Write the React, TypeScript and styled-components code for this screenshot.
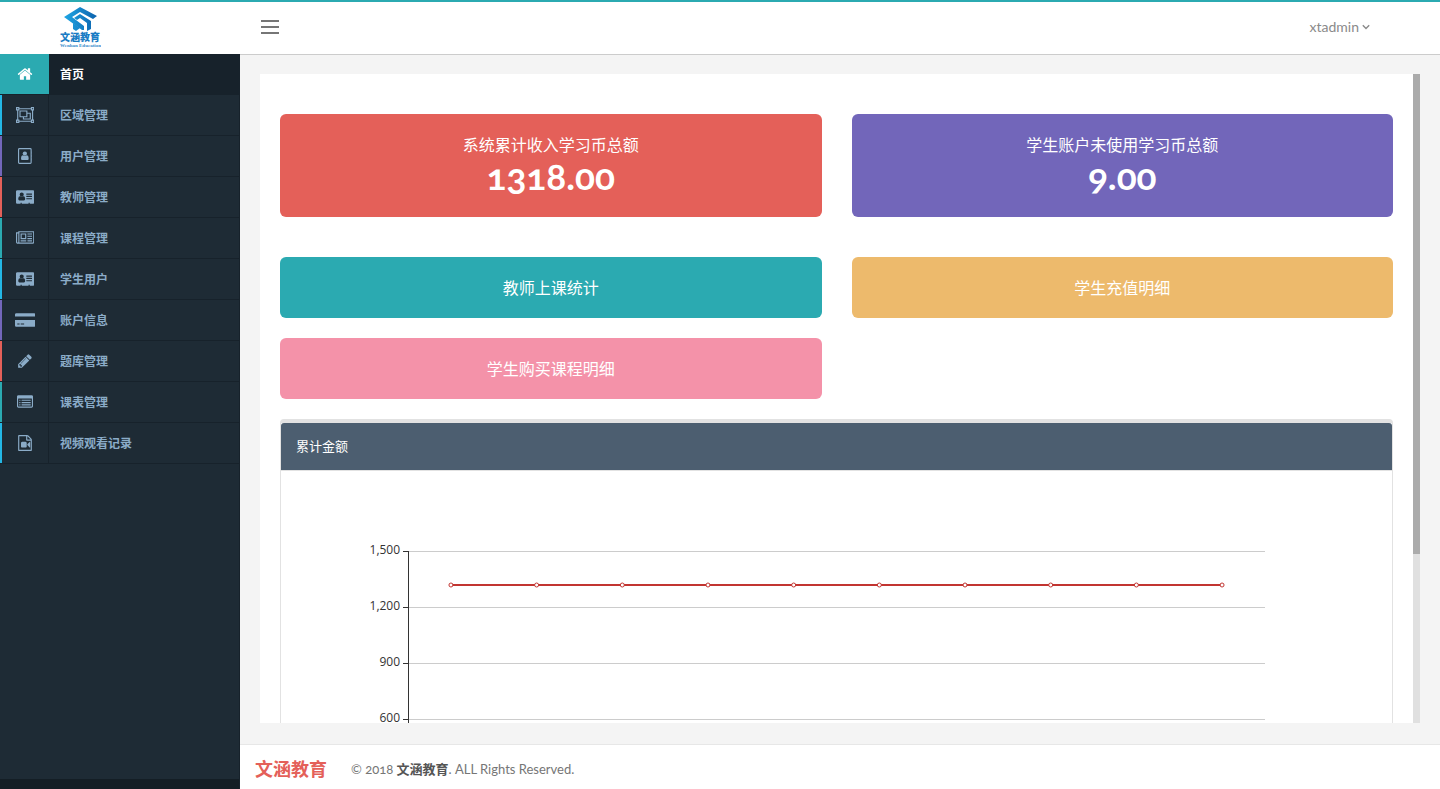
import React, { useEffect, useRef, useState } from "react";
import styled, { createGlobalStyle } from "styled-components";

const GlobalStyle = createGlobalStyle`
  * { box-sizing: border-box; }
  body {
    margin: 0;
    background: #f4f4f4;
    color: #767676;
    font-family: Lato, "Noto Sans CJK SC", sans-serif;
    font-size: 13px;
    line-height: 20px;
    font-variant-numeric: oldstyle-nums;
  }
  a { color: inherit; text-decoration: none; }
  h1, h2, p, ul { margin: 0; padding: 0; }
`;

const Page = styled.div`
  display: flex;
  flex-direction: column;
  height: 100vh;
`;

const Header = styled.header`
  display: flex;
  flex: none;
  height: 54px;
  background: #fff;
  border-top: 2px solid #2baab1;
`;

const Brand = styled.a`
  display: flex;
  width: 240px;
  padding: 5px 0 0 59px;
`;

const Toolbar = styled.div`
  display: flex;
  flex: 1;
  align-items: center;
  justify-content: space-between;
  padding: 0 70px 2px 21px;
`;

const MenuButton = styled.button`
  display: flex;
  flex-direction: column;
  gap: 4px;
  width: 18px;
  padding: 0;
  border: 0;
  background: none;
`;

const MenuBar = styled.span`
  height: 2px;
  background: #767676;
`;

const AccountButton = styled.button`
  display: flex;
  align-items: center;
  gap: 3px;
  padding: 0;
  border: 0;
  background: none;
  color: #8a8a8a;
  font: inherit;
  font-size: 14px;
`;

const Columns = styled.div`
  display: flex;
  flex: 1;
  min-height: 0;
`;

const Sidebar = styled.nav`
  display: flex;
  flex: none;
  flex-direction: column;
  justify-content: space-between;
  width: 240px;
  background: #1e2b35;
  border-right: 1px solid #17222b;
`;

const SidebarFoot = styled.div`
  height: 10px;
  background: #141e25;
`;

const NavList = styled.ul`
  list-style: none;
`;

const NavLink = styled.a<{ $active?: boolean }>`
  display: flex;
  height: 41px;
  border-bottom: 1px solid #17222b;
  background: ${(p) => (p.$active ? "#17222b" : "transparent")};
  color: ${(p) => (p.$active ? "#fff" : "#8bacc8")};
  font-size: 12px;
  font-weight: 700;
  line-height: 42px;
`;

const NavIcon = styled.span<{ $accent: string; $active?: boolean }>`
  display: flex;
  align-items: center;
  justify-content: center;
  width: 49px;
  margin-right: 11px;
  border-left: 2px solid ${(p) => p.$accent};
  border-right: 1px solid ${(p) => (p.$active ? p.$accent : "#17222b")};
  background: ${(p) => (p.$active ? p.$accent : "transparent")};
`;

const Main = styled.div`
  display: flex;
  flex: 1;
  flex-direction: column;
  min-width: 0;
  border-top: 1px solid #ccc;
`;

const ContentArea = styled.main`
  display: flex;
  flex: 1;
  min-height: 0;
  padding: 19px 20px 21px;
`;

const ScrollBody = styled.div`
  flex: 1;
  min-width: 0;
  padding: 40px 20px;
  overflow-y: auto;
  scrollbar-width: none;
  background: #fff;
`;

const ScrollTrack = styled.div`
  flex: none;
  width: 7px;
  background: #e0e0e0;
`;

const ScrollThumb = styled.div`
  background: #ababab;
`;

const StatGrid = styled.section`
  display: grid;
  grid-template-columns: 1fr 1fr;
  gap: 30px;
  margin-bottom: 40px;
  text-align: center;
`;

const LinkGrid = styled(StatGrid)`
  gap: 20px 30px;
  margin-bottom: 20px;
`;

const StatCard = styled.div<{ $color: string }>`
  height: 103px;
  padding: 20px 0;
  border-radius: 6px;
  background: ${(p) => p.$color};
  color: #fff;
`;

const StatTitle = styled.h2`
  font-size: 16px;
  font-weight: 400;
  line-height: 21px;
`;

const StatValue = styled.p`
  font-size: 37px;
  font-weight: 700;
  line-height: 42px;
`;

const LinkCard = styled.a<{ $color: string }>`
  border-radius: 6px;
  background: ${(p) => p.$color};
  color: #fff;
  font-size: 16px;
  line-height: 61px;
`;

const Panel = styled.section`
  border: 1px solid #e2e2e2;
  border-top-width: 4px;
  border-radius: 4px;
`;

const PanelTitle = styled.h2`
  padding: 0 15px;
  border-bottom: 1px solid #e2e2e2;
  border-radius: 3px 3px 0 0;
  background: #4c5e70;
  color: #fff;
  font-size: 13px;
  font-weight: 400;
  line-height: 47px;
`;

const PanelBody = styled.div`
  padding: 20px;
`;

const Chart = styled.svg`
  display: block;
  width: 100%;
  height: 400px;
  font-family: "Open Sans", sans-serif;
  font-size: 12px;
  font-variant-numeric: lining-nums;
`;

const Footer = styled.footer`
  display: flex;
  flex: none;
  align-items: center;
  gap: 24px;
  height: 45px;
  padding: 3px 15px 0;
  border-top: 1px solid #e7e7e7;
  background: #fff;
`;

const FooterBrand = styled.strong`
  color: #e46059;
  font-size: 18px;
`;

const Copyright = styled.p`
  strong { color: #555; }
`;

const Glyph = ({ w = 1792, children }: { w?: number; children: React.ReactNode }) => (
  <svg width={(w * 16) / 1792} height="16" viewBox={`0 0 ${w} 1792`} fill="currentColor" aria-hidden="true">
    {children}
  </svg>
);

const HomeIcon = () => (
  <Glyph>
    <path d="M1472 992v480q0 26-19 45t-45 19h-384v-384h-256v384h-384q-26 0-45-19t-19-45v-480q0-1 .5-3t.5-3l575-474 575 474q1 2 1 6zm223-69l-62 74q-8 9-21 11h-3q-13 0-21-7l-692-577-692 577q-12 8-24 7-13-2-21-11l-62-74q-8-10-7-23.5t11-21.5l719-599q32-26 76-26t76 26l244 204v-195q0-14 9-23t23-9h192q14 0 23 9t9 23v408l219 182q10 8 11 21.5t-7 23.5z" />
  </Glyph>
);

const GroupIcon = () => (
  <Glyph w={2048}>
    <g fill="none" stroke="currentColor" strokeWidth="128">
      <path d="M320 192h1408M320 1600h1408M192 320v1152M1856 320v1152" />
      <path d="M64 64h256v256H64zM1728 64h256v256h-256zM64 1472h256v256H64zM1728 1472h256v256h-256z" />
      <path d="M448 448h768v640H448zM1216 704h384v640H832v-256" />
    </g>
  </Glyph>
);

const AddressBookIcon = () => (
  <Glyph w={1664}>
    <rect x="64" y="64" width="1408" height="1664" rx="96" fill="none" stroke="currentColor" strokeWidth="128" />
    <path d="M1536 384h96q32 0 32 32v192q0 32-32 32h-96zM1536 768h96q32 0 32 32v192q0 32-32 32h-96zM1536 1152h96q32 0 32 32v192q0 32-32 32h-96z" />
    <circle cx="768" cy="620" r="240" />
    <path d="M570 820q90 76 198 76t198-76q230 0 230 380 0 144-110 144H450q-110 0-110-144 0-380 230-380z" />
  </Glyph>
);

const CardIcon = () => (
  <Glyph w={2048}>
    <path d="M1024 1131q0-64-9-117.5t-29.5-103-60.5-78-97-28.5q-6 4-30 18t-37.5 21.5-35.5 17.5-43 14.5-42 4.5-42-4.5-43-14.5-35.5-17.5-37.5-21.5-30-18q-57 0-97 28.5t-60.5 78-29.5 103-9 117.5 37 106.5 91 42.5h512q54 0 91-42.5t37-106.5zm-157-520q0-94-66.5-160.5t-160.5-66.5-160.5 66.5-66.5 160.5 66.5 160.5 160.5 66.5 160.5-66.5 66.5-160.5zm925 509v-64q0-14-9-23t-23-9h-576q-14 0-23 9t-9 23v64q0 14 9 23t23 9h576q14 0 23-9t9-23zm0-260v-56q0-15-10.5-25.5t-25.5-10.5h-568q-15 0-25.5 10.5t-10.5 25.5v56q0 15 10.5 25.5t25.5 10.5h568q15 0 25.5-10.5t10.5-25.5zm0-252v-64q0-14-9-23t-23-9h-576q-14 0-23 9t-9 23v64q0 14 9 23t23 9h576q14 0 23-9t9-23zm256-320v1216q0 66-47 113t-113 47h-352v-96q0-14-9-23t-23-9h-64q-14 0-23 9t-9 23v96h-768v-96q0-14-9-23t-23-9h-64q-14 0-23 9t-9 23v96h-352q-66 0-113-47t-47-113v-1216q0-66 47-113t113-47h1728q66 0 113 47t47 113z" />
  </Glyph>
);

const NewsIcon = () => (
  <Glyph w={2048}>
    <path d="M1024 512h-384v384h384v-384zm128 640v128h-640v-128h640zm0-768v640h-640v-640h640zm640 768v128h-512v-128h512zm0-256v128h-512v-128h512zm0-256v128h-512v-128h512zm0-256v128h-512v-128h512zm-1536 960v-960h-128v960q0 26 19 45t45 19 45-19 19-45zm1664 0v-1088h-1536v1088q0 33-11 64h1483q26 0 45-19t19-45zm128-1216v1216q0 80-56 136t-136 56h-1664q-80 0-136-56t-56-136v-1088h256v-128h1792z" />
  </Glyph>
);

const CreditIcon = () => (
  <Glyph w={2304}>
    <path d="M0 1504v-608h2304v608q0 66-47 113t-113 47h-1984q-66 0-113-47t-47-113zm640-224v128h384v-128h-384zm-384 0v128h256v-128h-256zm1888-1152q66 0 113 47t47 113v224h-2304v-224q0-66 47-113t113-47h1984z" />
  </Glyph>
);

const PencilIcon = () => (
  <Glyph>
    <path d="M491 1536l91-91-235-235-91 91v107h128v128h107zm523-928q0-22-22-22-10 0-17 7l-542 542q-7 7-7 17 0 22 22 22 10 0 17-7l542-542q7-7 7-17zm-54-192l416 416-832 832h-416v-416zm683 96q0 53-37 90l-166 166-416-416 166-165q36-38 90-38 53 0 91 38l235 234q37 39 37 91z" />
  </Glyph>
);

const ListIcon = () => (
  <Glyph>
    <path
      fillRule="evenodd"
      d="M160 128h1472q66 0 113 47t47 113v1088q0 66-47 113t-113 47H160q-66 0-113-47T0 1376V288q0-66 47-113t113-47zM160 512q-32 0-32 32v832q0 32 32 32h1472q32 0 32-32V544q0-32-32-32z"
    />
    <path d="M256 640h128v128H256zM512 640h1024v128H512zM256 896h128v128H256zM512 896h1024v128H512zM256 1152h128v128H256zM512 1152h1024v128H512z" />
  </Glyph>
);

const VideoFileIcon = () => (
  <Glyph>
    <path d="M1596 380q28 28 48 76t20 88v1152q0 40-28 68t-68 28h-1344q-40 0-68-28t-28-68v-1600q0-40 28-68t68-28h896q40 0 88 20t76 48zm-444-244v376h376q-10-29-22-41l-313-313q-12-12-41-22zm384 1528v-1024h-416q-40 0-68-28t-28-68v-416h-768v1536h1280zm-576-896q52 0 90 38t38 90v384q0 52-38 90t-90 38h-384q-52 0-90-38t-38-90v-384q0-52 38-90t90-38h384zm492 2q20 8 20 30v576q0 22-20 30-8 2-12 2-14 0-23-9l-265-266v-90l265-266q9-9 23-9 4 0 12 2z" />
  </Glyph>
);

const Logo = () => (
  <svg width="42" height="42" viewBox="0 0 42 42" role="img" aria-label="文涵教育">
    <defs>
      <linearGradient id="roof" gradientUnits="userSpaceOnUse" x1="5" y1="0" x2="38" y2="0">
        <stop offset="0" stopColor="#1ea6e4" />
        <stop offset="1" stopColor="#0c62ad" />
      </linearGradient>
    </defs>
    <g fill="url(#roof)">
      <path d="M5 10L21 0l17 9-4 3-13-7-8 5 12 9v4h-2z" />
      <path d="M15 11l6-4 11 7v8l-4 2v-8l-7-5-3 2z" />
      <path d="M14 16l7 5-4 3-3-2z" />
    </g>
    <text x="1" y="34" fontSize="10" fontWeight="900" fill="#1a7cc4" fontFamily="'Noto Sans CJK SC', sans-serif">
      文涵教育
    </text>
    <text x="1" y="40" fontSize="5" fontWeight="700" fill="#3a8ccb" fontFamily="'Liberation Serif', serif">
      Wenhan Education
    </text>
  </svg>
);

const BLUE = "#23b7e5";
const PURPLE = "#7266ba";
const RED = "#e46059";
const TEAL = "#2baab1";

const navItems = [
  { label: "首页", accent: TEAL, Icon: HomeIcon, active: true },
  { label: "区域管理", accent: BLUE, Icon: GroupIcon },
  { label: "用户管理", accent: PURPLE, Icon: AddressBookIcon },
  { label: "教师管理", accent: RED, Icon: CardIcon },
  { label: "课程管理", accent: TEAL, Icon: NewsIcon },
  { label: "学生用户", accent: BLUE, Icon: CardIcon },
  { label: "账户信息", accent: PURPLE, Icon: CreditIcon },
  { label: "题库管理", accent: RED, Icon: PencilIcon },
  { label: "课表管理", accent: TEAL, Icon: ListIcon },
  { label: "视频观看记录", accent: BLUE, Icon: VideoFileIcon },
];

const totals = Array(10).fill(1318);
const ticks = [1500, 1200, 900, 600, 300, 0];
const CHART_TOP = 60;
const CHART_HEIGHT = 280;
const yOf = (value: number) => CHART_TOP + Math.round(CHART_HEIGHT * (1 - value / 1500));
const xOf = (index: number) => `${10 + (80 / totals.length) * (index + 0.5)}%`;

const TotalsChart = () => (
  <Chart role="img" aria-label="累计金额">
    {ticks.map((t) => (
      <g key={t}>
        <line x1="10%" x2="90%" y1={yOf(t)} y2={yOf(t)} stroke="#ccc" shapeRendering="crispEdges" />
        <svg x="10%" y={yOf(t)} overflow="visible">
          <line x1="-5" x2="0" y1="0" y2="0" stroke="#333" shapeRendering="crispEdges" />
          <text x="-8" y="3" textAnchor="end" fill="#333">
            {t.toLocaleString("en-US")}
          </text>
        </svg>
      </g>
    ))}
    <line x1="10%" x2="10%" y1={CHART_TOP} y2={CHART_TOP + CHART_HEIGHT} stroke="#333" shapeRendering="crispEdges" />
    <line x1={xOf(0)} x2={xOf(totals.length - 1)} y1={yOf(1318)} y2={yOf(1318)} stroke="#c23531" strokeWidth="2" />
    {totals.map((v, i) => (
      <circle key={i} cx={xOf(i)} cy={yOf(v)} r="2" fill="#fff" stroke="#c23531" />
    ))}
  </Chart>
);

const ScrollPane = ({ children }: { children: React.ReactNode }) => {
  const body = useRef<HTMLDivElement>(null);
  const [thumb, setThumb] = useState({ size: 100, offset: 0 });

  useEffect(() => {
    const update = () => {
      const el = body.current;
      if (!el) return;
      setThumb({
        size: (el.clientHeight / el.scrollHeight) * 100,
        offset: (el.scrollTop / el.scrollHeight) * el.clientHeight,
      });
    };
    const el = body.current;
    update();
    el?.addEventListener("scroll", update);
    window.addEventListener("resize", update);
    return () => {
      el?.removeEventListener("scroll", update);
      window.removeEventListener("resize", update);
    };
  }, []);

  return (
    <>
      <ScrollBody ref={body}>{children}</ScrollBody>
      <ScrollTrack>
        <ScrollThumb style={{ height: `${thumb.size}%`, transform: `translateY(${thumb.offset}px)` }} />
      </ScrollTrack>
    </>
  );
};

export default function App() {
  return (
    <Page>
      <GlobalStyle />
      <Header>
        <Brand href="#">
          <Logo />
        </Brand>
        <Toolbar>
          <MenuButton aria-label="菜单">
            <MenuBar />
            <MenuBar />
            <MenuBar />
          </MenuButton>
          <AccountButton>
            xtadmin
            <svg width="8" height="6" viewBox="0 0 8 6" fill="none" stroke="currentColor" strokeWidth="1.4" aria-hidden="true">
              <path d="M.8 1.2L4 4.4l3.200-3.200" />
            </svg>
          </AccountButton>
        </Toolbar>
      </Header>
      <Columns>
        <Sidebar>
          <NavList>
            {navItems.map(({ label, accent, Icon, active }) => (
              <li key={label}>
                <NavLink href="#" $active={active}>
                  <NavIcon $accent={accent} $active={active}>
                    <Icon />
                  </NavIcon>
                  {label}
                </NavLink>
              </li>
            ))}
          </NavList>
          <SidebarFoot />
        </Sidebar>
        <Main>
          <ContentArea>
            <ScrollPane>
              <StatGrid>
                <StatCard $color={RED}>
                  <StatTitle>系统累计收入学习币总额</StatTitle>
                  <StatValue>1318.00</StatValue>
                </StatCard>
                <StatCard $color={PURPLE}>
                  <StatTitle>学生账户未使用学习币总额</StatTitle>
                  <StatValue>9.00</StatValue>
                </StatCard>
              </StatGrid>
              <LinkGrid>
                <LinkCard href="#" $color={TEAL}>教师上课统计</LinkCard>
                <LinkCard href="#" $color="#edba6c">学生充值明细</LinkCard>
                <LinkCard href="#" $color="#f492a9">学生购买课程明细</LinkCard>
              </LinkGrid>
              <Panel>
                <PanelTitle>累计金额</PanelTitle>
                <PanelBody>
                  <TotalsChart />
                </PanelBody>
              </Panel>
            </ScrollPane>
          </ContentArea>
          <Footer>
            <FooterBrand>文涵教育</FooterBrand>
            <Copyright>
              © 2018 <strong>文涵教育</strong>. ALL Rights Reserved.
            </Copyright>
          </Footer>
        </Main>
      </Columns>
    </Page>
  );
}
